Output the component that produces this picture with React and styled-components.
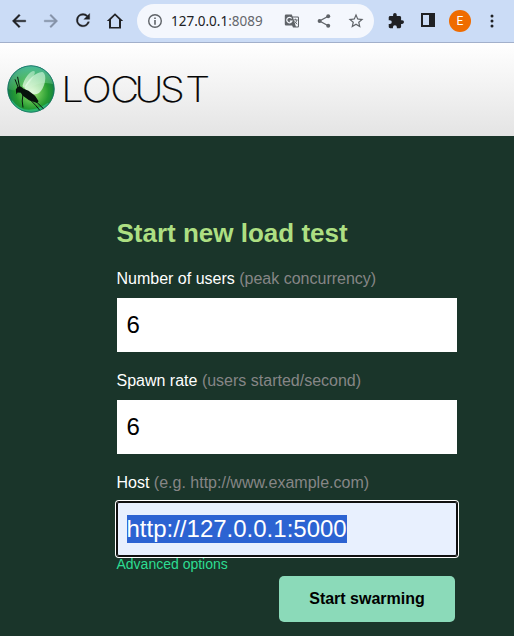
import React from "react";
import styled, { createGlobalStyle } from "styled-components";

const GlobalStyle = createGlobalStyle`
  * { box-sizing: border-box; }
  body {
    margin: 0;
    background: #1a352a;
    font-family: "Liberation Sans", Arial, sans-serif;
  }
`;

const Page = styled.div`
  display: flex;
  flex-direction: column;
  width: 514px;
  height: 636px;
  overflow: hidden;
  background: #1a352a;
`;

const Toolbar = styled.div`
  display: flex;
  align-items: center;
  height: 43px;
  padding: 0 12px 1px 9px;
  background: #cbdcf6;
  border-bottom: 1px solid #a2b0cb;
`;

const Glyph = styled.svg`
  display: block;
  flex: none;
  width: ${(p) => p.$size || 20}px;
  height: ${(p) => p.$size || 20}px;
  margin-left: ${(p) => p.$gap || 0}px;
  fill: ${(p) => p.$color || "#202124"};
`;

const AddressBar = styled.div`
  display: flex;
  align-items: center;
  flex: none;
  width: 237px;
  height: 34px;
  margin-left: 12px;
  padding-left: 10px;
  border-radius: 17px;
  background: #f4f7fd;
`;

const Url = styled.span`
  flex: none;
  width: 105px;
  margin-left: 8px;
  font: 13.5px/20px "Noto Sans", sans-serif;
  color: #202124;
`;

const Port = styled.span`
  color: #64676c;
`;

const Avatar = styled.div`
  flex: none;
  width: 22px;
  height: 22px;
  margin-left: 13px;
  border-radius: 50%;
  background: #ef6c00;
  color: #fff;
  font: 12px/22px Roboto, sans-serif;
  text-align: center;
`;

const Header = styled.header`
  flex: none;
  height: 93px;
  padding: 17px 0 0 2px;
  background: linear-gradient(#ffffff, #e4e4e4);
`;

const Logo = styled.svg`
  display: block;
  width: 212px;
  height: 60px;
`;

const Wordmark = styled.text`
  font-family: Inter, sans-serif;
  font-size: 35.5px;
  font-weight: 200;
  fill: #050505;
  stroke: #050505;
  stroke-width: 0.2px;
`;

const Form = styled.main`
  display: flex;
  flex-direction: column;
  width: 340px;
  margin: 82px 0 0 117px;
`;

const Title = styled.h2`
  margin: 0 0 21px -0.5px;
  font-size: 26px;
  line-height: 30px;
  font-weight: bold;
  color: #addf82;
`;

const Field = styled.label`
  display: block;
  height: ${(p) => (p.$last ? 88 : 102)}px;
  margin-left: -0.5px;
  font-size: 16px;
  line-height: 20px;
  color: #fff;
`;

const Hint = styled.span`
  color: #868686;
`;

const Box = styled.div`
  display: flex;
  align-items: center;
  width: 340px;
  height: 54px;
  margin: 9px 0 0 0.5px;
  padding: 0 9.5px;
  font-size: 24px;
  line-height: 28px;
  color: #000;
  background: #fff;
`;

const FocusedBox = styled(Box)`
  background: #e8f0fe;
  border-radius: 2px;
  box-shadow: 0 0 0 1px #101010, inset 0 0 0 1px #101010, 0 0 0 2px #fff;
`;

const Selection = styled.span`
  background: #2c63d2;
  color: #fff;
`;

const Advanced = styled.a`
  margin: -5px 0 0 -0.5px;
  font-size: 14px;
  line-height: 16px;
  color: #2ddc92;
`;

const Submit = styled.button`
  align-self: flex-end;
  width: 176px;
  height: 46px;
  margin: 4px 2px 0 0;
  padding: 0;
  border: 0;
  border-radius: 5px;
  background: #8bdab9;
  color: #000;
  font: bold 16px/20px "Liberation Sans", Arial, sans-serif;
`;

function LocustLogo() {
  return (
    <Logo viewBox="2 60 212 60" role="img" aria-label="Locust">
      <defs>
        <radialGradient id="orb" cx="0.52" cy="0.57" r="0.57">
          <stop offset="0" stopColor="#b2e993" />
          <stop offset="0.28" stopColor="#67c554" />
          <stop offset="0.62" stopColor="#259b31" />
          <stop offset="0.86" stopColor="#168044" />
          <stop offset="1" stopColor="#075d46" />
        </radialGradient>
        <linearGradient id="shine" x1="0" y1="0" x2="0" y2="1">
          <stop offset="0" stopColor="#53d5b3" stopOpacity="0.8" />
          <stop offset="1" stopColor="#b2edb1" stopOpacity="0.12" />
        </linearGradient>
        <linearGradient id="wing" x1="1" y1="0" x2="0" y2="1">
          <stop offset="0" stopColor="#c9f3d7" stopOpacity="0.7" />
          <stop offset="1" stopColor="#f4fff0" stopOpacity="0.95" />
        </linearGradient>
        <clipPath id="ball"><circle cx="31" cy="89" r="23.3" /></clipPath>
      </defs>
      <circle cx="31" cy="89" r="23.5" fill="url(#orb)" />
      <g clipPath="url(#ball)">
        <path d="M5 88V63H56V85Q43 80 31 87Q20 94 5 88Z" fill="url(#shine)" />
        <path d="M11 101Q24 120 49 104" fill="none" stroke="#38cfa1" strokeWidth="3" opacity="0.55" />
      </g>
      <circle cx="31" cy="89" r="23.2" fill="none" stroke="#15756b" strokeWidth="0.8" />
      <path d="M22.5 86C24 78 31 70 34.5 71.2C36.5 73 30 83 24 88Z" fill="url(#wing)" opacity="0.75" />
      <path d="M24.5 88C27 80 37 71 43 72.2C47.5 75 45 88 39 93C34 96 27 93 24.5 88Z" fill="url(#wing)" opacity="0.9" />
      <path d="M15.8 89.5L17.5 87L20.7 86.6L23.6 88.7L28.5 90.8L35 95.7L38.6 101.3L37 103L29 100.2L22.5 95.5L20.8 92.7L17.6 92.4L16.3 94.2Z" fill="#07130c" />
      <path d="M18.4 88L15 79.3M19.5 87L17.6 76.8M23 94L22.2 101L23 107.5M27.5 97L35.5 105.2L39.5 110M33 98.5L43.5 108.8" fill="none" stroke="#07130c" strokeWidth="1" />
      <g transform="scale(1.12 1)">
        <Wordmark x="54.7 73 98.4 120.2 142.8 165.5" y="102">LOCUST</Wordmark>
      </g>
    </Logo>
  );
}

export default function App() {
  return (
    <Page>
      <GlobalStyle />
      <Toolbar>
        <Glyph viewBox="0 0 24 24"><path d="M20 11H7.83l5.59-5.59L12 4l-8 8 8 8 1.41-1.41L7.83 13H20z" stroke="#202124" strokeWidth="0.5" /></Glyph>
        <Glyph $gap={12} $color="#8592a7" viewBox="0 0 24 24"><path d="m12 4-1.41 1.41L16.17 11H4v2h12.17l-5.58 5.59L12 20l8-8z" stroke="#8592a7" strokeWidth="0.5" /></Glyph>
        <Glyph $gap={12} viewBox="0 1 24 24"><path d="M17.65 6.35A7.96 7.96 0 0 0 12 4a8 8 0 1 0 7.73 10h-2.08A6 6 0 1 1 12 6c1.66 0 3.14.69 4.22 1.78L13 11h7V4z" stroke="#202124" strokeWidth="0.4" /></Glyph>
        <Glyph $gap={12} viewBox="0 0 20 20"><path d="M10 2.2 1.8 10H4v7.6h12V10h2.2zM6 15.9V8.4l4-3.9 4 3.9v7.5z" /></Glyph>
        <AddressBar>
          <Glyph $size={16} $color="#5f6368" viewBox="0 0 16 16"><path fillRule="evenodd" d="M8 1a7 7 0 1 0 0 14A7 7 0 0 0 8 1m0 1.4a5.6 5.6 0 1 1 0 11.2A5.6 5.6 0 0 1 8 2.4M7.2 4.4v1.5h1.6V4.4zm0 2.7v4.6h1.6V7.1z" /></Glyph>
          <Url>127.0.0.1<Port>:8089</Port></Url>
          <Glyph $gap={8} $size={16} $color="#5f6368" viewBox="0 0 16 16">
            <path fillRule="evenodd" d="M2 1.5h5.8l.8 2h5.2q1.2 0 1.2 1.2v8.6q0 1.2-1.2 1.2H9l-.9-2H2q-1.2 0-1.2-1.2V2.7Q.8 1.5 2 1.5m7 3 2.9 9h1.7q.4 0 .4-.4V4.9q0-.4-.4-.4z" />
            <path d="M7.7 5.5A2.7 2.7 0 1 0 8 8.1H5.8" fill="none" stroke="#f4f7fd" strokeWidth="1.2" />
            <path d="M9.6 6.9h4M11.4 5.7v1.2M13 7c-.5 1.7-1.5 3-2.7 3.9M10.4 8.3l2.8 2.9" fill="none" stroke="#5f6368" strokeWidth="0.9" />
          </Glyph>
          <Glyph $gap={16} $size={16} $color="#5f6368" viewBox="0 0 16 16">
            <circle cx="12.2" cy="3.3" r="2" /><circle cx="3.6" cy="8" r="2" /><circle cx="12.2" cy="12.7" r="2" />
            <path d="M12.2 3.3 3.6 8l8.6 4.7" fill="none" stroke="#5f6368" strokeWidth="1.3" />
          </Glyph>
          <Glyph $gap={15} $size={18} $color="#5f6368" viewBox="0 0 24 24"><path d="m22 9.24-7.19-.62L12 2 9.19 8.63 2 9.24l5.46 4.73L5.82 21 12 17.27 18.18 21l-1.63-7.03zM12 15.4l-3.76 2.27 1-4.28-3.32-2.88 4.38-.38L12 6.1l1.71 4.04 4.38.38-3.32 2.88 1 4.28z" /></Glyph>
        </AddressBar>
        <Glyph $gap={14} $size={16} viewBox="1 1 22 22"><path d="M20.5 11H19V7c0-1.1-.9-2-2-2h-4V3.5a2.5 2.5 0 0 0-5 0V5H4c-1.1 0-2 .9-2 2v3.8h1.5a2.7 2.7 0 0 1 0 5.4H2V20c0 1.1.9 2 2 2h3.8v-1.5a2.7 2.7 0 0 1 5.4 0V22H17c1.1 0 2-.9 2-2v-4h1.5a2.5 2.5 0 0 0 0-5" /></Glyph>
        <Glyph $gap={16} $size={16} viewBox="0 1 16 16"><path fillRule="evenodd" d="M1 1h14v14H1zm2 2v10h6V3z" /></Glyph>
        <Avatar>E</Avatar>
        <Glyph $gap={13} $size={16} viewBox="0 0 16 16"><circle cx="8" cy="3" r="1.5" /><circle cx="8" cy="8" r="1.5" /><circle cx="8" cy="13" r="1.5" /></Glyph>
      </Toolbar>
      <Header><LocustLogo /></Header>
      <Form>
        <Title>Start new load test</Title>
        <Field>Number of users <Hint>(peak concurrency)</Hint><Box>6</Box></Field>
        <Field>Spawn rate <Hint>(users started/second)</Hint><Box>6</Box></Field>
        <Field $last>Host <Hint>(e.g. http://www.example.com)</Hint>
          <FocusedBox><Selection>http://127.0.0.1:5000</Selection></FocusedBox>
        </Field>
        <Advanced>Advanced options</Advanced>
        <Submit>Start swarming</Submit>
      </Form>
    </Page>
  );
}
